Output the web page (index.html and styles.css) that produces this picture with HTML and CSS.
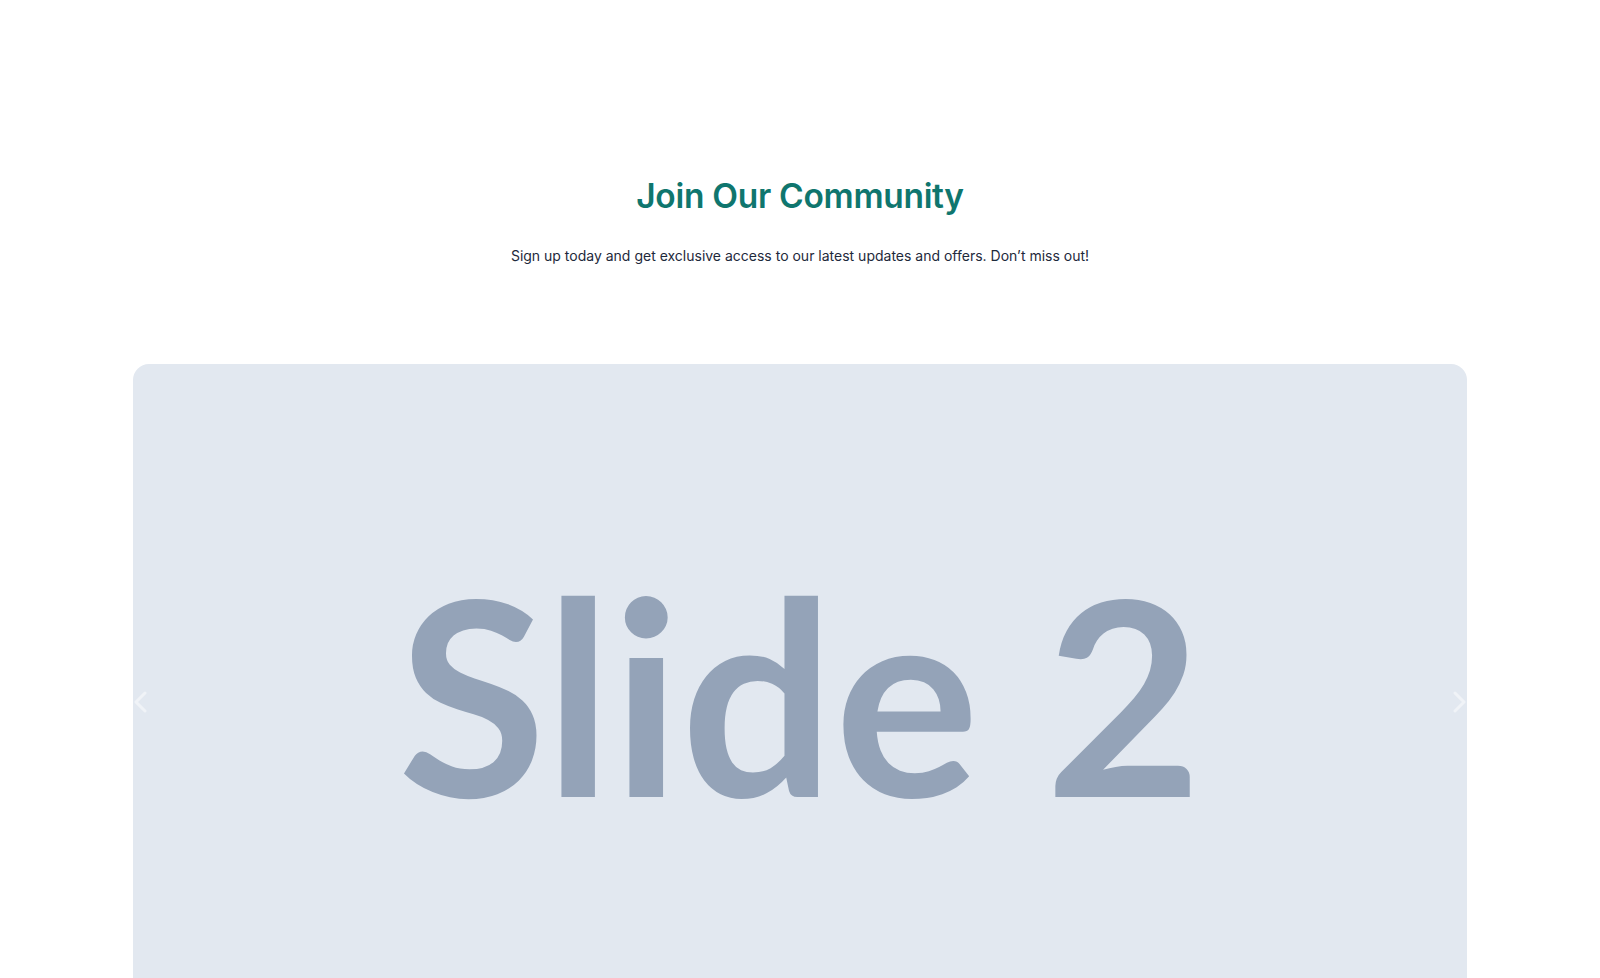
FILE: index.html
```html
<!DOCTYPE html>
<html lang="en">
<head>
<meta charset="utf-8">
<title>Join Our Community</title>
<link rel="stylesheet" href="styles.css">
</head>
<body>
<section class="community">
  <h2 class="title">Join Our Community</h2>
  <p class="subtitle">Sign up today and get exclusive access to our latest updates and offers. Don’t miss out!</p>
  <div class="slider">
    <div class="slide"><span class="slide-label">Slide 2</span></div>
    <button class="nav nav-prev" aria-label="Previous slide">
      <svg width="14" height="22" viewBox="0 0 14 22"><polyline points="12,2 3,11 12,20" fill="none" stroke="#ffffff" stroke-width="3" stroke-linecap="round" stroke-linejoin="round"/></svg>
    </button>
    <button class="nav nav-next" aria-label="Next slide">
      <svg width="14" height="22" viewBox="0 0 14 22"><polyline points="2,2 11,11 2,20" fill="none" stroke="#ffffff" stroke-width="3" stroke-linecap="round" stroke-linejoin="round"/></svg>
    </button>
  </div>
</section>
</body>
</html>
```

FILE: styles.css
```css
html, body {
  margin: 0;
  padding: 0;
  background: #ffffff;
}

body {
  font-family: "Inter", "Lato", "Noto Sans", sans-serif;
  color: #1e293b;
}

.community {
  padding-top: 176px;
  display: flex;
  flex-direction: column;
  align-items: center;
}

.title {
  margin: 0 0 28px;
  font-family: "Inter", sans-serif;
  font-size: 33.5px;
  line-height: 40px;
  font-weight: 600;
  letter-spacing: -0.3px;
  color: #0f766e;
  text-align: center;
}

.subtitle {
  margin: 0 0 96px;
  font-family: "Inter", sans-serif;
  font-size: 14px;
  line-height: 24px;
  font-weight: 400;
  color: #1e293b;
  text-align: center;
}

.slider {
  position: relative;
  width: 83.3333%;
  height: 656px;
  border-radius: 16px;
  background: #e2e8f0;
  overflow: hidden;
}

.slide {
  height: 100%;
  display: flex;
  align-items: center;
  justify-content: center;
}

.slide-label {
  font-family: "Lato", sans-serif;
  font-weight: 700;
  font-size: 271px;
  line-height: 1;
  color: #94a3b8;
}

.nav {
  position: absolute;
  top: calc(50% + 10px);
  transform: translateY(-50%);
  padding: 0;
  border: 0;
  background: none;
  opacity: 0.5;
  display: flex;
  cursor: pointer;
}

.nav-prev {
  left: 0;
}

.nav-next {
  right: 0;
}
```
